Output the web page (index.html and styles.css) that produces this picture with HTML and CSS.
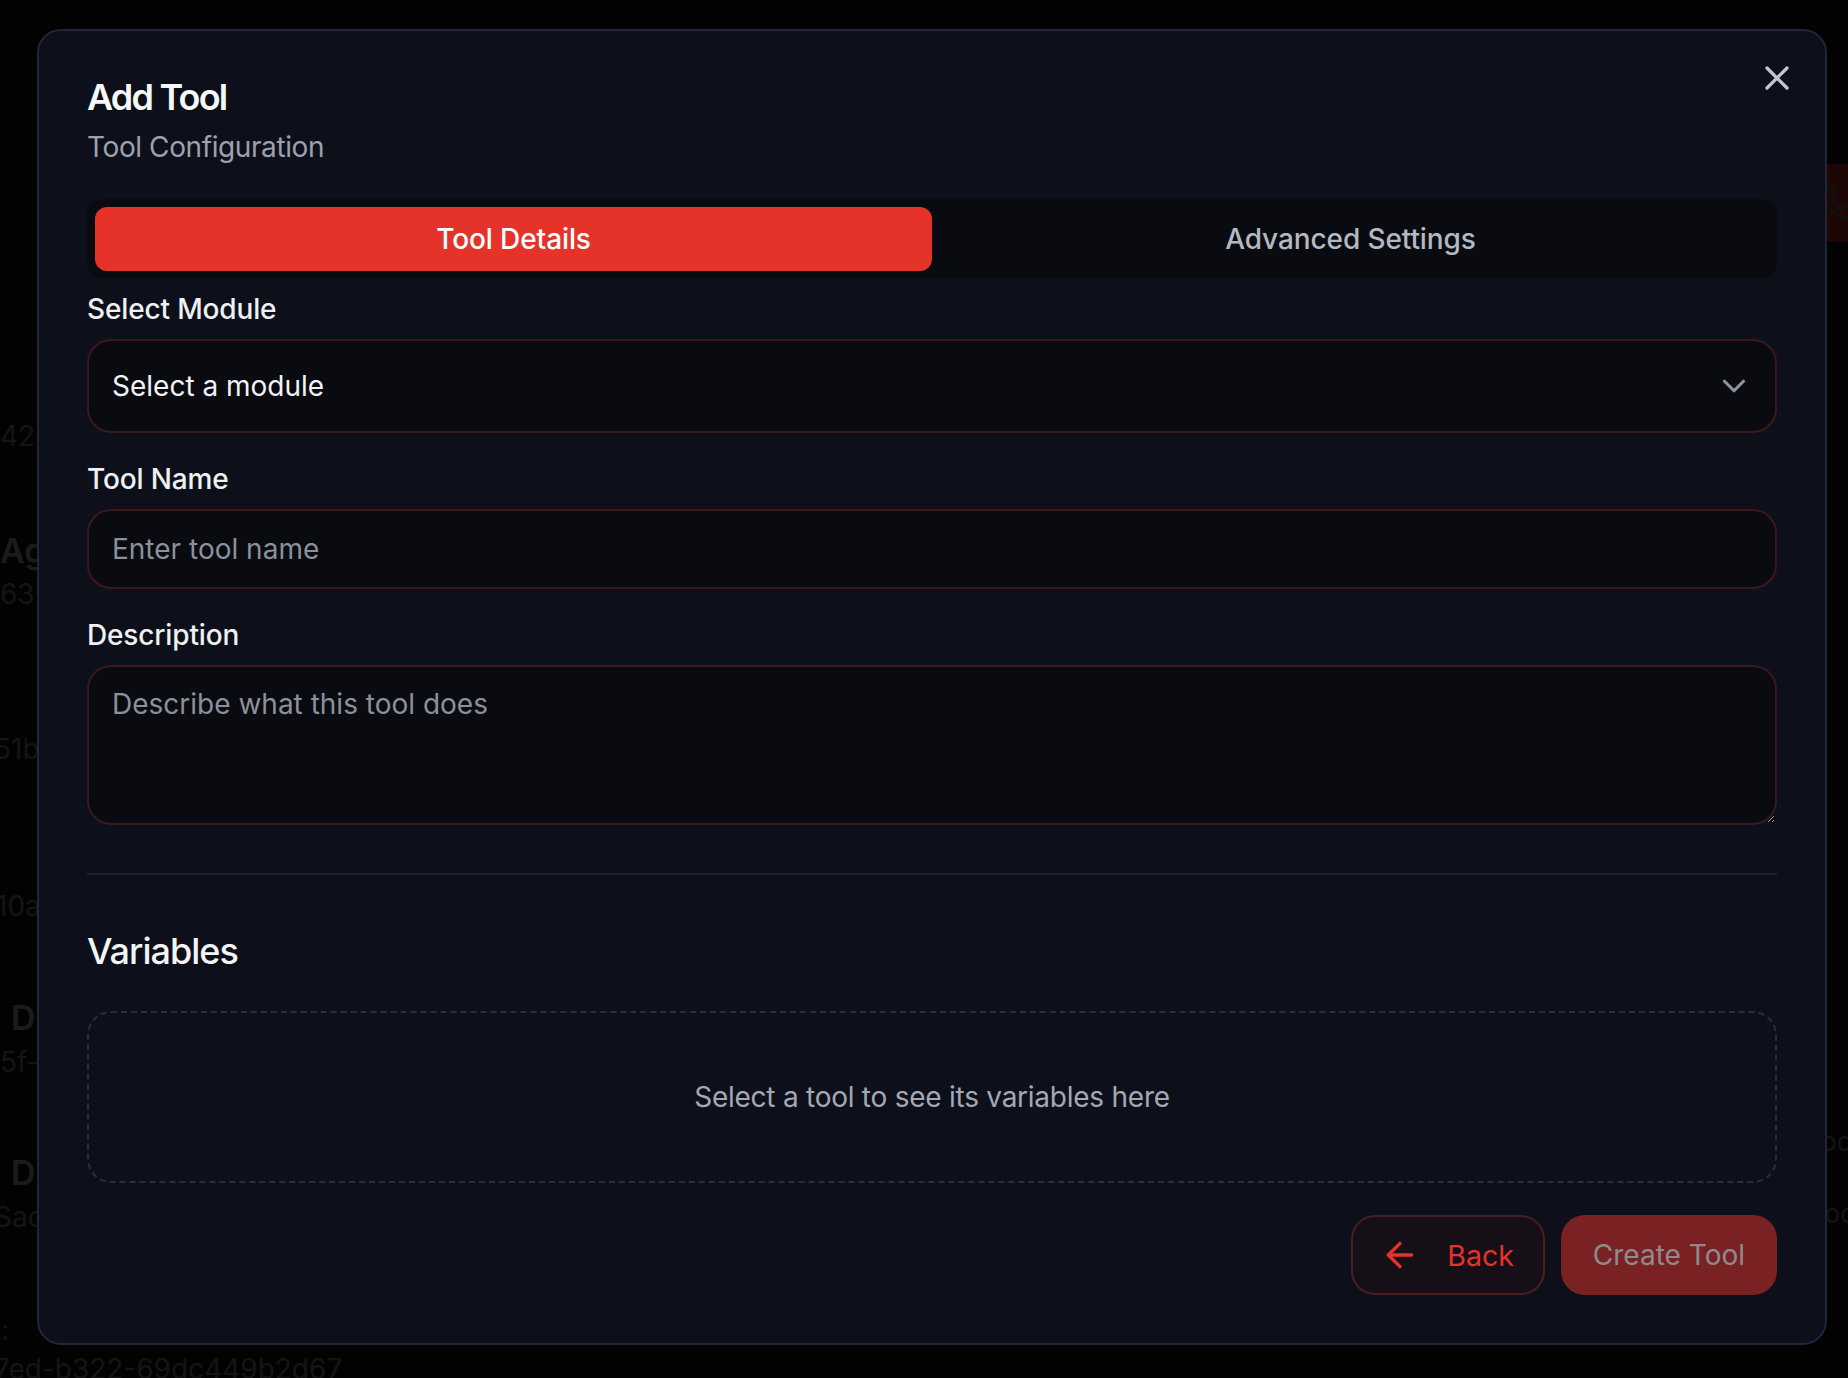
FILE: index.html
```html
<!DOCTYPE html>
<html lang="en">
<head>
<meta charset="utf-8">
<title>Add Tool</title>
<link rel="stylesheet" href="styles.css">
</head>
<body>
<div class="bg">
  <div class="bg-left">
    <div class="bg-band">
      <div class="bg-id bg-first">4229c1e0a7</div>
    </div>
    <div class="bg-name bg-m73">Agent Support</div>
    <div class="bg-id bg-m3">63-4f8e-a1c2</div>
    <div class="bg-id bg-m115">51b7-9e2c-4d1a</div>
    <div class="bg-id bg-m117">10a4-bb32-77e1</div>
    <div class="bg-name bg-m72 bg-shift">1 Demo Agent</div>
    <div class="bg-id bg-m4">5f-92ac-18de</div>
    <div class="bg-name bg-m71 bg-shift">1 Demo Line</div>
    <div class="bg-id bg-m4 bg-neg">Sad2-7c1f-90b3</div>
    <div class="bg-id bg-m73 bg-tiny">t:</div>
    <div class="bg-id bg-m-1 bg-neg">7ed-b322-69dc449b2d67</div>
  </div>
  <div class="bg-main">
    <div class="bg-top"></div>
    <div class="bg-actions">
      <div class="bg-call">
        <svg viewBox="0 0 24 24" width="40" height="40" fill="none" stroke="#5a4a48" stroke-width="2" stroke-linecap="round" stroke-linejoin="round"><path d="M22 16.92v3a2 2 0 0 1-2.18 2 19.790 19.790 0 0 1-8.630-3.070 19.500 19.500 0 0 1-6-6 19.790 19.790 0 0 1-3.070-8.670A2 2 0 0 1 4.110 2h3a2 2 0 0 1 2 1.720c.13.96.36 1.900.7 2.810a2 2 0 0 1-.45 2.110L8.090 9.910a16 16 0 0 0 6 6l1.270-1.270a2 2 0 0 1 2.110-.45c.91.34 1.850.57 2.810.7A2 2 0 0 1 22 16.920z"/></svg>
      </div>
    </div>
    <div class="bg-side">
      <div class="bg-side-item bg-side-1">Lookup</div>
      <div class="bg-side-item bg-side-2">Webhook</div>
    </div>
    <div class="bg-fields">
      <div class="bg-field">Forwarding Phone Number</div>
      <div class="bg-field">Key Terms</div>
    </div>
  </div>
</div>

<div class="overlay"></div>

<div class="dialog" role="dialog">
  <button class="close" aria-label="Close">
    <svg viewBox="0 0 24 24" width="40" height="40" fill="none" stroke="currentColor" stroke-width="2" stroke-linecap="round" stroke-linejoin="round"><path d="M18 6 6 18"/><path d="m6 6 12 12"/></svg>
  </button>

  <div class="header">
    <h2 class="title">Add Tool</h2>
    <p class="subtitle">Tool Configuration</p>
  </div>

  <div class="tabs">
    <div class="tab active">Tool Details</div>
    <div class="tab">Advanced Settings</div>
  </div>

  <div class="form">
    <div class="field">
      <label class="label">Select Module</label>
      <button class="select">
        <span>Select a module</span>
        <svg viewBox="0 0 24 24" width="38" height="38" fill="none" stroke="currentColor" stroke-width="2" stroke-linecap="round" stroke-linejoin="round"><path d="m6 9 6 6 6-6"/></svg>
      </button>
    </div>
    <div class="field">
      <label class="label">Tool Name</label>
      <input class="input" type="text" placeholder="Enter tool name">
    </div>
    <div class="field">
      <label class="label">Description</label>
      <textarea class="textarea" placeholder="Describe what this tool does"></textarea>
    </div>
  </div>

  <div class="divider"></div>

  <h3 class="section-title">Variables</h3>
  <div class="empty">Select a tool to see its variables here</div>

  <div class="footer">
    <button class="btn btn-back">
      <svg viewBox="0 0 24 24" width="40" height="40" fill="none" stroke="currentColor" stroke-width="2" stroke-linecap="round" stroke-linejoin="round"><path d="m12 19-7-7 7-7"/><path d="M19 12H5"/></svg>
      <span>Back</span>
    </button>
    <button class="btn btn-create">Create Tool</button>
  </div>
</div>
</body>
</html>
```

FILE: styles.css
```css
* { box-sizing: border-box; }

html, body {
  margin: 0;
  padding: 0;
}

body {
  width: 1848px;
  height: 1378px;
  overflow: hidden;
  background: #0b0b0f;
  font-family: Inter, "Noto Sans", "Liberation Sans", sans-serif;
  color: #f3f4f6;
}

/* ---------- background page (dimmed) ---------- */
.bg {
  display: flex;
  width: 1848px;
  height: 1378px;
  background: #0c0c11;
}

.bg-left {
  width: 434px;
  flex: none;
  display: flex;
  flex-direction: column;
  overflow: hidden;
}

.bg-band {
  margin-top: 330px;
  height: 148px;
  background: #170909;
  border-top: 2px solid #2a0e0e;
  border-bottom: 2px solid #2a0e0e;
  display: flex;
  flex-direction: column;
}

.bg-id {
  font-size: 28px;
  line-height: 40px;
  color: #66666c;
  white-space: nowrap;
}

.bg-name {
  font-size: 34px;
  line-height: 40px;
  font-weight: 600;
  color: #85858b;
  white-space: nowrap;
}

.bg-first { margin-top: 84px; }
.bg-m73 { margin-top: 73px; }
.bg-m3 { margin-top: 3px; }
.bg-m115 { margin-top: 115px; margin-left: -6px; }
.bg-m117 { margin-top: 117px; margin-left: -4px; }
.bg-m72 { margin-top: 72px; }
.bg-m4 { margin-top: 4px; }
.bg-m71 { margin-top: 71px; }
.bg-m-1 { margin-top: -1px; }
.bg-shift { margin-left: -12px; }
.bg-neg { margin-left: -6px; }
.bg-tiny { margin-left: -8px; }

.bg-main {
  flex: 1;
  display: flex;
  flex-direction: column;
}

.bg-top {
  height: 82px;
  border-bottom: 2px solid #141419;
}

.bg-actions {
  display: flex;
  justify-content: flex-end;
  margin-top: 82px;
}

.bg-call {
  width: 120px;
  height: 78px;
  margin-right: -80px;
  background: #8a2419;
  border-radius: 16px;
  display: flex;
  align-items: center;
  padding-left: 10px;
}

.bg-side {
  display: flex;
  flex-direction: column;
  align-items: flex-end;
  margin-top: 880px;
}

.bg-side-item {
  font-size: 26px;
  line-height: 40px;
  color: #66666c;
  white-space: nowrap;
}

.bg-side-1 { margin-right: -50px; }
.bg-side-2 { margin-top: 32px; margin-right: -22px; }

.bg-fields {
  display: grid;
  grid-template-columns: 957px 1fr;
  padding-left: 49px;
  margin-top: 40px;
}

.bg-field {
  font-size: 28px;
  line-height: 40px;
  color: #66666c;
}

.overlay {
  position: fixed;
  inset: 0;
  background: rgba(0, 0, 0, 0.8);
}

/* ---------- dialog ---------- */
.dialog {
  position: fixed;
  left: 37px;
  top: 29px;
  width: 1790px;
  background: #0d101a;
  border: 2px solid #1f2637;
  border-radius: 24px;
  padding: 48px;
  display: flex;
  flex-direction: column;
}

.close {
  position: absolute;
  right: 28px;
  top: 27px;
  width: 40px;
  height: 40px;
  padding: 0;
  border: 0;
  background: transparent;
  color: #c3c6cc;
  display: flex;
}

.header {
  display: flex;
  flex-direction: column;
}

.title {
  margin: 0;
  font-size: 36px;
  line-height: 36px;
  font-weight: 600;
  letter-spacing: -1.8px;
  color: #f6f7f9;
}

.subtitle {
  margin: 12px 0 0;
  font-size: 28px;
  line-height: 40px;
  letter-spacing: -0.4px;
  color: #9ca1ac;
}

.tabs {
  margin-top: 32px;
  height: 80px;
  padding: 8px;
  display: grid;
  grid-template-columns: 1fr 1fr;
  background: #090b11;
  border-radius: 16px;
}

.tab {
  display: flex;
  align-items: center;
  justify-content: center;
  border-radius: 12px;
  font-size: 28px;
  font-weight: 500;
  letter-spacing: -0.1px;
  color: #b4b8c1;
}

.tab.active {
  background: #e5332a;
  color: #ffffff;
}

.form {
  margin-top: 16px;
  display: flex;
  flex-direction: column;
  gap: 32px;
}

.field {
  display: flex;
  flex-direction: column;
}

.label {
  font-size: 28px;
  line-height: 28px;
  font-weight: 500;
  letter-spacing: -0.15px;
  color: #eef0f3;
  margin-bottom: 16px;
}

.select,
.input,
.textarea {
  width: 100%;
  border: 2px solid #3b181d;
  border-radius: 24px;
  background: #090b11;
  font-family: inherit;
  font-size: 28px;
  color: #f2f3f5;
  outline: none;
}

.select {
  height: 94px;
  padding: 0 22px 0 23px;
  display: flex;
  align-items: center;
  justify-content: space-between;
  text-align: left;
}

.select svg {
  color: #8e939c;
}

.input {
  height: 80px;
  padding: 0 23px;
}

.textarea {
  height: 160px;
  padding: 13px 23px;
  line-height: 48px;
  resize: vertical;
  display: block;
}

.input::placeholder,
.textarea::placeholder {
  color: #8b909b;
  opacity: 1;
}

.divider {
  height: 2px;
  background: #1c2232;
  margin: 48px 0;
}

.section-title {
  margin: 0;
  font-size: 36px;
  line-height: 56px;
  font-weight: 500;
  letter-spacing: -1px;
  color: #f3f4f6;
}

.empty {
  margin-top: 32px;
  border: 2px dashed #272e3f;
  border-radius: 24px;
  padding: 64px;
  text-align: center;
  font-size: 28px;
  line-height: 40px;
  letter-spacing: -0.25px;
  color: #a3a8b3;
}

.footer {
  margin-top: 32px;
  display: flex;
  justify-content: flex-end;
  gap: 16px;
}

.btn {
  height: 80px;
  border-radius: 24px;
  font-family: inherit;
  font-size: 28px;
  font-weight: 400;
  display: flex;
  align-items: center;
}

.btn-back {
  padding: 0 29px 0 27px;
  gap: 27px;
  background: #170f18;
  border: 2px solid #4a1d23;
  color: #e5332a;
}

.btn-back span {
  font-size: 28.5px;
}

.btn-create {
  padding: 0 32px;
  background: #7a2223;
  border: 0;
  color: #8f8b8c;
}
```
